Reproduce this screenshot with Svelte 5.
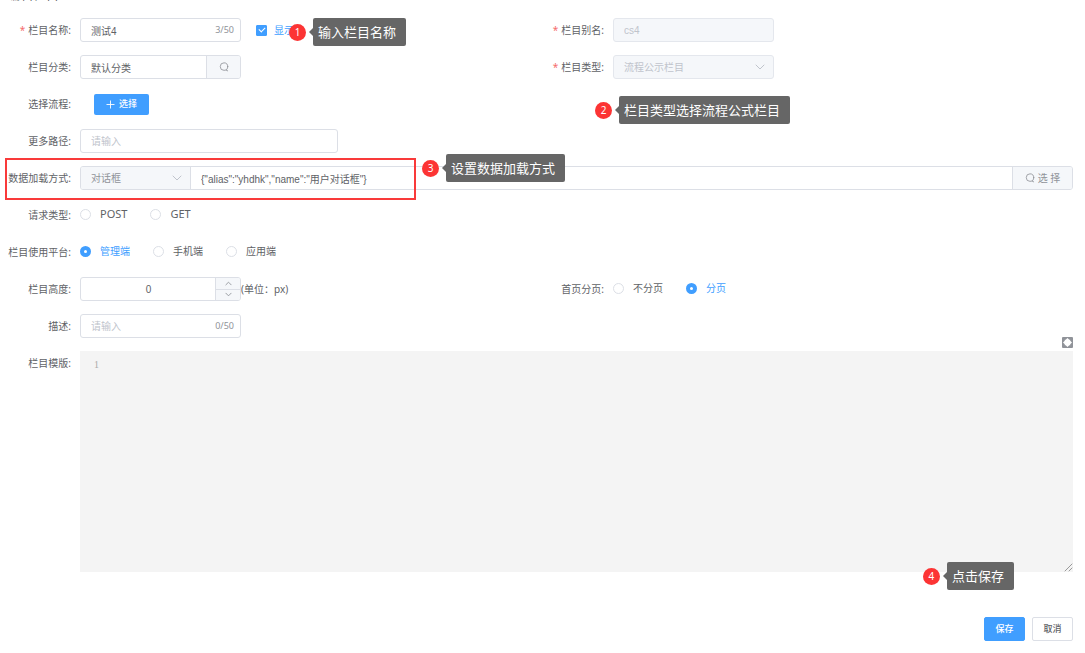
<script lang="ts">
  let name = $state('测试4');
  let visible = $state(true);
  let category = $state('默认分类');
  let morePath = $state('');
  let loadType = $state('dialog');
  let loadConfig = $state('{"alias":"yhdhk","name":"用户对话框"}');
  let requestType = $state('');
  let platform = $state('manage');
  let height = $state(0);
  let paging = $state('page');
  let description = $state('');
  let template = $state('');

  const requestTypes = ['POST', 'GET'];

  const platforms = [
    { value: 'manage', label: '管理端' },
    { value: 'mobile', label: '手机端' },
    { value: 'app', label: '应用端' }
  ];

  const pagings = [
    { value: 'none', label: '不分页' },
    { value: 'page', label: '分页' }
  ];
</script>

{#snippet callout(step: number, text: string, place: string)}
  <div class="callout {place}">
    <span class="step">{step}</span>
    <span class="tip">{text}</span>
  </div>
{/snippet}

{#snippet searchIcon()}
  <svg class="search" viewBox="0 0 12 12" aria-hidden="true">
    <circle cx="6" cy="5.5" r="4.5" />
    <path d="M8.6 9.8 10.4 10.6" />
  </svg>
{/snippet}

{#snippet chevron()}
  <svg class="chevron" viewBox="0 0 10 6" aria-hidden="true">
    <path d="M1 1l4 4 4-4" />
  </svg>
{/snippet}

<form class="page" onsubmit={(e) => e.preventDefault()}>
  <h1>编辑栏目</h1>

  <div class="row">
    <div class="field">
      <label class="label required" for="name">栏目名称:</label>
      <div class="content">
        <div class="box short">
          <input id="name" type="text" maxlength="50" bind:value={name} />
          <span class="count">{name.length}/50</span>
        </div>
        <label class="check">
          <input type="checkbox" bind:checked={visible} />
          <span>显示</span>
        </label>
      </div>
      {@render callout(1, '输入栏目名称', 'at-name')}
    </div>
    <div class="field">
      <label class="label required" for="alias">栏目别名:</label>
      <div class="content">
        <div class="box short disabled">
          <input id="alias" type="text" value="cs4" disabled />
        </div>
      </div>
    </div>
  </div>

  <div class="row">
    <div class="field">
      <label class="label" for="category">栏目分类:</label>
      <div class="content">
        <div class="box short">
          <input id="category" type="text" bind:value={category} />
          <button class="append" type="button" aria-label="搜索">
            {@render searchIcon()}
          </button>
        </div>
      </div>
    </div>
    <div class="field">
      <label class="label required" for="type">栏目类型:</label>
      <div class="content">
        <div class="box short disabled">
          <select id="type" disabled>
            <option>流程公示栏目</option>
          </select>
          {@render chevron()}
        </div>
      </div>
    </div>
  </div>

  <div class="row">
    <div class="field">
      <label class="label" for="flow">选择流程:</label>
      <div class="content">
        <button id="flow" class="pick" type="button">
          <svg viewBox="0 0 10 10" aria-hidden="true">
            <path d="M5 1v8M1 5h8" />
          </svg>
          选择
        </button>
      </div>
    </div>
    <div class="field">
      {@render callout(2, '栏目类型选择流程公式栏目', 'at-type')}
    </div>
  </div>

  <div class="row">
    <div class="field">
      <label class="label" for="path">更多路径:</label>
      <div class="content">
        <div class="box medium">
          <input id="path" type="text" placeholder="请输入" bind:value={morePath} />
        </div>
      </div>
    </div>
  </div>

  <div class="row">
    <div class="field wide">
      <label class="label" for="load">数据加载方式:</label>
      <div class="content">
        <div class="box full">
          <div class="prepend">
            <select id="load" bind:value={loadType}>
              <option value="dialog">对话框</option>
            </select>
            {@render chevron()}
          </div>
          <input type="text" aria-label="数据加载配置" bind:value={loadConfig} />
          <button class="append text" type="button">
            {@render searchIcon()}
            选 择
          </button>
        </div>
      </div>
      <div class="highlight"></div>
      {@render callout(3, '设置数据加载方式', 'at-load')}
    </div>
  </div>

  <div class="row">
    <div class="field" role="radiogroup" aria-labelledby="request-label">
      <span class="label" id="request-label">请求类型:</span>
      <div class="content radios latin">
        {#each requestTypes as item}
          <label>
            <input type="radio" name="request" value={item} bind:group={requestType} />
            <span>{item}</span>
          </label>
        {/each}
      </div>
    </div>
  </div>

  <div class="row">
    <div class="field" role="radiogroup" aria-labelledby="platform-label">
      <span class="label" id="platform-label">栏目使用平台:</span>
      <div class="content radios">
        {#each platforms as item}
          <label>
            <input type="radio" name="platform" value={item.value} bind:group={platform} />
            <span>{item.label}</span>
          </label>
        {/each}
      </div>
    </div>
  </div>

  <div class="row">
    <div class="field">
      <label class="label" for="height">栏目高度:</label>
      <div class="content">
        <div class="box short number">
          <input id="height" type="number" min="0" bind:value={height} />
          <div class="stepper">
            <button type="button" aria-label="增加" onclick={() => height++}>
              <svg viewBox="0 0 8 5" aria-hidden="true"><path d="M1 4l3-3 3 3" /></svg>
            </button>
            <button
              type="button"
              aria-label="减少"
              onclick={() => (height = Math.max(0, height - 1))}
            >
              <svg viewBox="0 0 8 5" aria-hidden="true"><path d="M1 1l3 3 3-3" /></svg>
            </button>
          </div>
        </div>
        <span class="unit">(单位：px)</span>
      </div>
    </div>
    <div class="field" role="radiogroup" aria-labelledby="paging-label">
      <span class="label" id="paging-label">首页分页:</span>
      <div class="content radios">
        {#each pagings as item}
          <label>
            <input type="radio" name="paging" value={item.value} bind:group={paging} />
            <span>{item.label}</span>
          </label>
        {/each}
      </div>
    </div>
  </div>

  <div class="row">
    <div class="field">
      <label class="label" for="description">描述:</label>
      <div class="content">
        <div class="box short">
          <input
            id="description"
            type="text"
            maxlength="50"
            placeholder="请输入"
            bind:value={description}
          />
          <span class="count">{description.length}/50</span>
        </div>
      </div>
    </div>
  </div>

  <div class="row last">
    <div class="field wide top">
      <label class="label" for="template">栏目模版:</label>
      <div class="content">
        <div class="editor">
          <button class="expand" type="button" aria-label="全屏">
            <svg viewBox="0 0 11 11" aria-hidden="true">
              <rect width="11" height="11" rx="1" fill="#909399" />
              <path
                d="M5.5 1 7.3 2.8H8.2V3.7L10 5.5 8.2 7.3V8.2H7.3L5.5 10 3.7 8.2H2.8V7.3L1 5.5 2.8 3.7V2.8H3.7Z"
                fill="#fff"
              />
            </svg>
          </button>
          <span class="line-number">1</span>
          <textarea id="template" spellcheck="false" bind:value={template}></textarea>
          <svg class="grip" viewBox="0 0 9 9" aria-hidden="true">
            <path d="M1 8l7-7M5 8l3-3" />
          </svg>
        </div>
      </div>
      {@render callout(4, '点击保存', 'at-save')}
    </div>
  </div>

  <footer>
    <button class="save" type="submit">保存</button>
    <button class="cancel" type="button">取消</button>
  </footer>
</form>

<style>
  :global(body) {
    margin: 0;
    background: #fff;
  }

  .page {
    display: flow-root;
    padding: 0 12px 12px 7px;
    color: #606266;
    font-family: 'Noto Sans', 'Noto Sans CJK SC', sans-serif;
    font-size: 10px;
    line-height: 14px;
  }

  .page * {
    box-sizing: border-box;
  }

  h1 {
    margin: -14px 0 16px;
    color: #606266;
    font-size: 13px;
    font-weight: 400;
    line-height: 16px;
  }

  .row {
    display: grid;
    grid-template-columns: 1fr 1fr;
    min-height: 24px;
    margin-bottom: 13px;
  }

  .row.last {
    margin-bottom: 45px;
  }

  .field {
    position: relative;
    display: flex;
    align-items: center;
    gap: 9px;
    min-width: 0;
  }

  .field.wide {
    grid-column: 1 / -1;
  }

  .field.top {
    align-items: flex-start;
  }

  .field.top .label {
    padding-top: 5px;
  }

  .label {
    flex: 0 0 64px;
    text-align: right;
    white-space: nowrap;
  }

  .required::before {
    content: '*';
    margin-right: 3px;
    color: #f56c6c;
  }

  .content {
    display: flex;
    flex: 1;
    align-items: center;
    min-width: 0;
  }

  .box {
    display: flex;
    position: relative;
    align-items: center;
    height: 24px;
    border: 1px solid #dcdfe6;
    border-radius: 3px;
    background: #fff;
    overflow: hidden;
  }

  .short {
    width: 35%;
  }

  .medium {
    width: 56%;
  }

  .full {
    width: 100%;
  }

  .disabled {
    border-color: #e4e7ed;
    background: #f5f7fa;
  }

  input[type='text'],
  input[type='number'],
  select {
    flex: 1;
    width: 100%;
    min-width: 0;
    height: 100%;
    margin: 0;
    padding: 0 10px;
    border: 0;
    outline: 0;
    background: transparent;
    color: #606266;
    font-family: 'Liberation Sans', 'Noto Sans CJK SC', sans-serif;
    font-size: 10px;
    appearance: none;
  }

  input::placeholder {
    color: #c0c4cc;
  }

  input:disabled,
  select:disabled {
    color: #c0c4cc;
    opacity: 1;
  }

  .count {
    padding-right: 6px;
    color: #909399;
    font-size: 9px;
  }

  svg {
    fill: none;
    stroke-linecap: round;
    stroke-linejoin: round;
  }

  .chevron {
    position: absolute;
    right: 8px;
    width: 10px;
    height: 6px;
    stroke: #c0c4cc;
  }

  .search {
    width: 10px;
    height: 10px;
    stroke: #909399;
  }

  button {
    display: flex;
    align-items: center;
    justify-content: center;
    margin: 0;
    padding: 0;
    border: 0;
    font: inherit;
    cursor: pointer;
  }

  .append {
    flex: 0 0 34px;
    height: 100%;
    border-left: 1px solid #dcdfe6;
    background: #f5f7fa;
    color: #909399;
  }

  .append.text {
    flex-basis: 60px;
    gap: 3px;
  }

  .prepend {
    display: flex;
    position: relative;
    flex: 0 0 110px;
    align-items: center;
    height: 100%;
    border-right: 1px solid #dcdfe6;
    background: #f5f7fa;
  }

  .prepend select {
    color: #909399;
  }

  .check {
    display: flex;
    align-items: center;
    gap: 7px;
    margin-left: 15px;
    color: #409eff;
  }

  .check input {
    width: 11px;
    height: 11px;
    margin: 0;
    border: 1px solid #dcdfe6;
    border-radius: 1px;
    appearance: none;
  }

  .check input:checked {
    display: grid;
    place-items: center;
    border-color: #409eff;
    background: #409eff;
  }

  .check input:checked::after {
    content: '';
    width: 3px;
    height: 5px;
    margin-bottom: 2px;
    border: solid #fff;
    border-width: 0 1px 1px 0;
    transform: rotate(45deg);
  }

  .pick {
    gap: 4px;
    height: 21px;
    margin-left: 14px;
    padding: 0 12px;
    border-radius: 2px;
    background: #409eff;
    color: #fff;
    font-size: 9px;
    font-weight: 500;
  }

  .pick svg {
    width: 9px;
    height: 9px;
    stroke: #fff;
  }

  .radios {
    gap: 23px;
    padding-bottom: 2px;
  }

  .radios label {
    display: flex;
    align-items: center;
    gap: 9px;
  }

  .radios.latin {
    font-size: 11px;
  }

  .radios input {
    width: 11px;
    height: 11px;
    margin: 0;
    border: 1px solid #dcdfe6;
    border-radius: 50%;
    background: #fff;
    appearance: none;
  }

  .radios input:checked {
    border: 4px solid #409eff;
  }

  .radios input:checked + span {
    color: #409eff;
  }

  .number input {
    padding: 0 0 0 16px;
    text-align: center;
    appearance: textfield;
  }

  .stepper {
    display: flex;
    flex: 0 0 25px;
    flex-direction: column;
    height: 100%;
    border-left: 1px solid #dcdfe6;
  }

  .stepper button {
    flex: 1;
    background: #f5f7fa;
  }

  .stepper button + button {
    border-top: 1px solid #dcdfe6;
  }

  .stepper svg {
    width: 7px;
    height: 5px;
    stroke: #909399;
  }

  .editor {
    display: flex;
    position: relative;
    flex: 1;
    height: 221px;
    background: #f4f4f4;
  }

  .line-number {
    width: 24px;
    padding: 7px 5px 0 0;
    color: #aaa;
    font-family: 'Liberation Serif', serif;
    text-align: right;
  }

  textarea {
    flex: 1;
    padding: 7px 5px;
    border: 0;
    outline: 0;
    background: transparent;
    color: #606266;
    font-family: 'Liberation Mono', monospace;
    font-size: 10px;
    resize: none;
  }

  .expand {
    position: absolute;
    top: -14px;
    right: 0;
    background: none;
  }

  .expand svg {
    width: 11px;
    height: 11px;
  }

  .grip {
    position: absolute;
    right: 0;
    bottom: 0;
    width: 9px;
    height: 9px;
    stroke: #999;
  }

  footer {
    display: flex;
    justify-content: flex-end;
    gap: 7px;
  }

  footer button {
    width: 41px;
    height: 24px;
    border: 1px solid #dcdfe6;
    border-radius: 2px;
    background: #fff;
    color: #606266;
    font-size: 9px;
    font-weight: 500;
  }

  footer .save {
    border-color: #409eff;
    background: #409eff;
    color: #fff;
  }

  .highlight {
    position: absolute;
    top: -8px;
    left: -2px;
    width: 411px;
    height: 42px;
    border: 2px solid #f93a3a;
    pointer-events: none;
  }

  /* numbered guide bubbles that float over the form */
  .callout {
    display: flex;
    position: absolute;
    z-index: 1;
    align-items: center;
    gap: 7px;
    white-space: nowrap;
    pointer-events: none;
  }

  .step {
    width: 17px;
    height: 17px;
    border-radius: 50%;
    background: #fc3434;
    color: #fff;
    font-size: 10px;
    line-height: 17px;
    text-align: center;
  }

  .tip {
    position: relative;
    padding: 0 10px 0 5px;
    border-radius: 2px;
    background: rgba(90, 90, 90, 0.93);
    color: #fff;
    font-size: 13px;
    line-height: 28px;
  }

  .tip::before {
    content: '';
    position: absolute;
    top: 10px;
    right: 100%;
    border: solid transparent;
    border-width: 4px 4px 4px 0;
    border-right-color: rgba(90, 90, 90, 0.93);
  }

  .at-name {
    top: 0;
    left: 282px;
  }

  .at-type {
    top: 4px;
    left: 55px;
  }

  .at-load {
    top: -12px;
    left: 415px;
  }

  .at-save {
    right: 59px;
    bottom: -18px;
  }
</style>
